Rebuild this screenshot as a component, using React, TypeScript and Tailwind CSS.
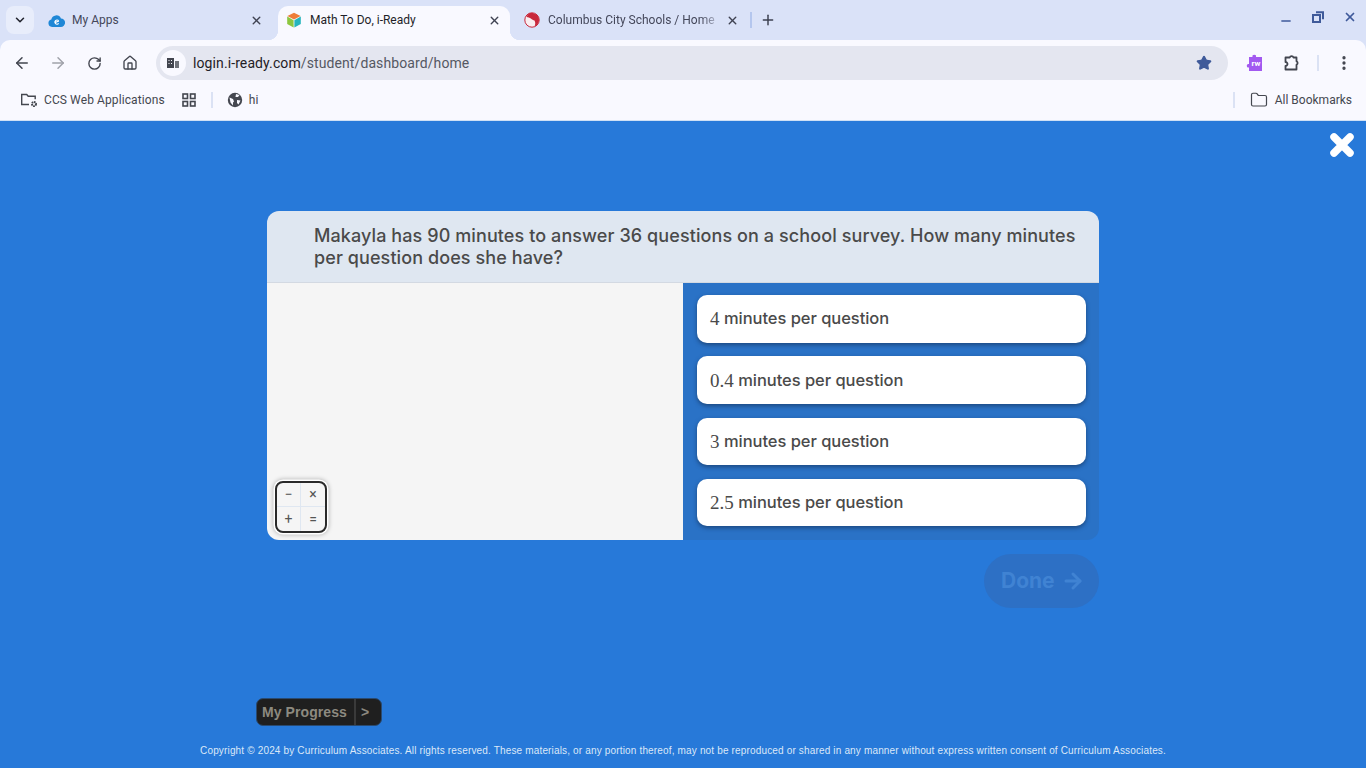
import React from "react";
import { ArrowLeft, ArrowRight, RotateCw, Home, ChevronDown, X, Plus, Minus, Star, Folder, MoreVertical } from "lucide-react";

const sans = "font-['Roboto','Liberation_Sans',sans-serif]";
const pop = "font-['Inter','Lato',sans-serif]";

function Tab({ active, icon, label, cls, fade }: { active?: boolean; icon: React.ReactNode; label: string; cls: string; fade?: boolean }) {
  return (
    <div className={`relative ${cls} h-[34px] mt-[6px] pb-[6px] flex items-center rounded-t-[10px] shrink-0 ${active ? "bg-[#f9f9ff] text-[#1f1f28]" : "text-[#44475a]"}`}>
      {active && <span className="absolute bottom-0 -left-[10px] w-[10px] h-[10px] bg-[radial-gradient(circle_at_0_0,transparent_10px,#f9f9ff_10.500px)]" />}
      {active && <span className="absolute bottom-0 -right-[10px] w-[10px] h-[10px] bg-[radial-gradient(circle_at_100%_0,transparent_10px,#f9f9ff_10.500px)]" />}
      <span className="w-4 h-4 flex items-center justify-center shrink-0">{icon}</span>
      <span className={`ml-[8px] flex-1 text-[12px] leading-4 whitespace-nowrap overflow-hidden ${fade ? "[mask-image:linear-gradient(to_right,black_88%,transparent)]" : ""}`}>{label}</span>
      <X size={13} strokeWidth={2.6} className="shrink-0 ml-1 text-[#3f4252]" />
    </div>
  );
}

function Answer({ num }: { num: string }) {
  return (
    <div className="h-[47.500px] rounded-[10px] bg-white pl-[13px] flex items-center text-[#4a4a4a] shadow-[0_2px_4px_rgba(20,50,90,0.65)]">
      <span className="font-['Liberation_Serif',serif] text-[19px] leading-none">{num}</span>
      <span className={`${pop} ml-[4.500px] text-[16.500px] font-medium tracking-[-0.05px]`}>minutes per question</span>
    </div>
  );
}

export default function App() {
  return (
    <div className={`w-[1366px] h-[768px] overflow-hidden flex flex-col bg-[#2779d9] ${sans}`}>
      <div className="shrink-0 bg-[#dae2f8]">
        {/* tab strip */}
        <div className="h-10 flex items-start pl-[6px]">
          <div className="w-[28px] h-[28px] mt-[6px] rounded-[8px] bg-[#e8edfb] flex items-center justify-center text-[#22242e]">
            <ChevronDown size={14} strokeWidth={2.6} />
          </div>
          <div className="ml-[6px] flex items-start">
            <Tab cls="w-[238px] pl-[8px] pr-[15px]" label="My Apps" icon={
              <svg viewBox="0 0 16 16" className="w-[17px] h-[17px] shrink-0"><path d="M3.800 14a3.500 3.500 0 0 1-.7-6.900A4.800 4.800 0 0 1 12.200 6 4 4 0 0 1 12 14Z" fill="#1f87d6" /><path d="M10 8.200A2 2 0 1 0 10 10.800M6.500 10l3.800-1.500" fill="none" stroke="#fff" strokeWidth="1.100" /></svg>
            } />
            <Tab active cls="w-[232px] pl-[8px] pr-[9px]" label="Math To Do, i-Ready" icon={
              <svg viewBox="0 0 16 16" className="w-4 h-4"><path d="M8 .7 14.600 4 8 7.600 1.400 4Z" fill="#ee7d3a" /><path d="M1.200 4.600 7.600 8.200v7.200L1.200 12Z" fill="#8cc63f" /><path d="M14.800 4.600 8.400 8.200v7.200l6.400-3.400Z" fill="#25b5bd" /></svg>
            } />
            <Tab fade cls="w-[240px] pl-[14px] pr-[11px]" label="Columbus City Schools / Home" icon={
              <svg viewBox="0 0 16 16" className="w-4 h-4"><circle cx="8" cy="8" r="7.200" fill="#f9eef0" stroke="#c8283c" strokeWidth="1" /><path d="M5 1.500C8 .3 15.500 1.500 15 8.500 14.800 11 13 13.500 10.500 14.500 11.500 12 11.500 10.500 10.500 8.500 8 8 6 5 2.500 5 3 3.500 4 2.200 5 1.500Z" fill="#c8283c" /></svg>
            } />
          </div>
          <div className="w-[2px] h-[16px] mt-[12px] bg-[#b4c6ee]" />
          <Plus size={16} strokeWidth={2.2} className="ml-[8px] mt-[12px] text-[#3c4050]" />
          <div className="ml-auto flex items-start text-[#3f5a9a]">
            <Minus size={14} strokeWidth={2.8} className="mt-[14px] mr-[19px]" />
            <svg viewBox="0 0 12 12" className="w-[12px] h-[12px] mt-[11px] mr-[19px]" fill="none" stroke="currentColor" strokeWidth="2"><rect x="1" y="4" width="7" height="7" /><path d="M4 1.200h7v7" /></svg>
            <X size={14} strokeWidth={3} className="mt-[10px] mr-[9px]" />
          </div>
        </div>

        {/* toolbar */}
        <div className="h-[46px] bg-[#f9f9ff] rounded-t-[10px] flex items-center pl-[13px] text-[#42454f]">
          <ArrowLeft size={18} strokeWidth={2} />
          <ArrowRight size={18} strokeWidth={2} className="ml-[18px] text-[#a0a2aa]" />
          <RotateCw size={15} strokeWidth={2.2} className="ml-[20px]" />
          <Home size={16} strokeWidth={2} className="ml-[20px]" />
          <div className="ml-[18px] w-[1072px] h-[34px] rounded-full bg-[#e4e6f0] flex items-center pl-[4px] pr-[16px]">
            <div className="w-[26px] h-[26px] rounded-full bg-[#f9f9ff] flex items-center justify-center">
              <svg viewBox="0 0 14 14" className="w-[14px] h-[14px]" fill="#42454f"><path d="M1 2h7v10H1Z" /><path d="M9 5h4v7H9Z" opacity=".75" /><path d="M2.500 4h1v1h-1Zm2.500 0h1v1H5ZM2.500 7h1v1h-1ZM5 7h1v1H5Z" fill="#f9f9ff" /></svg>
            </div>
            <span className="ml-[7px] text-[14px] tracking-[0.1px] text-[#1f2026]">login.i-ready.com<span className="text-[#555863]">/student/dashboard/home</span></span>
            <Star size={16} className="ml-auto text-[#3f5a9a]" fill="#3f5a9a" />
          </div>
          <div className="ml-[17px] w-[18px] h-[18px] flex items-center justify-center relative">
            <svg viewBox="0 0 18 18" className="w-[18px] h-[18px]"><path d="M4 3h3.500a1.800 1.800 0 1 1 3.500 0H17v14H4v-3.500a1.800 1.800 0 1 1 0-3.500Z" fill="#a259f0" /></svg>
            <span className="absolute left-[6.500px] top-[5px] text-[8px] font-bold text-white leading-[10px]">rw</span>
          </div>
          <svg viewBox="0 0 18 18" className="ml-[20px] w-[18px] h-[18px]" fill="none" stroke="currentColor" strokeWidth="1.800" strokeLinejoin="round"><path d="M2.500 3.500h4.200a2 2 0 0 1 3.800 0h3v3.700a2 2 0 0 1 0 3.600v4.700h-11v-3.500a2 2 0 0 0 0-4Z" /></svg>
          <div className="ml-[16px] w-[2px] h-[16px] bg-[#dbe2f4]" />
          <MoreVertical size={18} strokeWidth={2.400} className="ml-[16px]" />
        </div>

        {/* bookmarks */}
        <div className="h-[35px] bg-[#f9f9ff] flex items-center pb-[6px] pl-[20px] text-[12px] tracking-[0.1px] text-[#44474f] border-b border-[#cfe0f5]">
          <svg viewBox="0 0 18 16" className="w-[18px] h-[16px]" fill="none" stroke="#44474f" strokeWidth="1.400"><path d="M9 12.500H1.700V2.500h5l1.500 1.700h7v3" /><circle cx="14" cy="12" r="2" strokeWidth="2" strokeDasharray="1.500 .6" /></svg>
          <span className="ml-[6px]">CCS Web Applications</span>
          <svg viewBox="0 0 14 14" className="ml-[17px] w-[14px] h-[14px]" fill="none" stroke="#44474f" strokeWidth="1.600"><rect x="1" y="1" width="4.500" height="4.500" /><rect x="8.500" y="1" width="4.500" height="4.500" /><rect x="1" y="8.500" width="4.500" height="4.500" /><rect x="8.500" y="8.500" width="4.500" height="4.500" /></svg>
          <div className="ml-[15px] w-[2px] h-[16px] bg-[#dbe2f4]" />
          <svg viewBox="0 0 16 16" className="ml-[14px] w-[16px] h-[16px]"><circle cx="8" cy="8" r="7.200" fill="#44474f" /><path d="M2.500 5.500 6 7l1 2.500 -1 1v3L3.500 10.500ZM9 2l3.500 1-1.500 2H8.500ZM10 8l3.500.5-2 4L10 11Z" fill="#f9f9ff" /></svg>
          <span className="ml-[6px]">hi</span>
          <div className="ml-auto w-[2px] h-[16px] bg-[#dbe2f4]" />
          <Folder size={18} strokeWidth={1.600} className="ml-[15px]" />
          <span className="ml-[7px] mr-[14px] tracking-normal">All Bookmarks</span>
        </div>
      </div>

      {/* page */}
      <div className="relative flex-1 flex flex-col pt-[90px]">
        <svg viewBox="0 0 26 26" className="absolute left-[1329px] top-[11px] w-[26px] h-[26px]"><path d="M5 5 21 21M21 5 5 21" stroke="#fff" strokeWidth="7.500" strokeLinecap="round" /></svg>

        <div className="ml-[267px] w-[832px] h-[329px] rounded-[12px] overflow-hidden flex flex-col shrink-0">
          <div className={`h-[72px] shrink-0 bg-[#dfe7f1] border-b border-[#d3d9e2] pl-[47px] pr-[20px] pt-[14px] ${pop} text-[18px] leading-[22px] font-medium text-[#4a4a4a] tracking-[0.09px]`}>
            Makayla has 90 minutes to answer 36 questions on a school survey. How many minutes per question does she have?
          </div>
          <div className="flex-1 flex">
            <div className="w-[416px] bg-[#f5f5f5] relative">
              <div className="absolute left-[8px] bottom-[7px] w-[52px] h-[52px] rounded-[8px] border-2 border-[#2a2a2a] grid grid-cols-2 grid-rows-2 text-[#555] text-[14px] bg-[#f5f5f5] shadow-[0_0_0_1.500px_#fff,0_0_4px_2px_rgba(0,0,0,0.25)] overflow-hidden">
                <div className="flex items-center justify-center border-r border-b border-[#dfe7f1]">−</div>
                <div className="flex items-center justify-center border-b border-[#dfe7f1]">×</div>
                <div className="flex items-center justify-center border-r border-[#dfe7f1]">+</div>
                <div className="flex items-center justify-center">=</div>
              </div>
            </div>
            <div className="flex-1 bg-[#2a72c6] pt-[12px] pl-[14px] pr-[13px] flex flex-col gap-[13.800px]">
              <Answer num="4" />
              <Answer num="0.4" />
              <Answer num="3" />
              <Answer num="2.5" />
            </div>
          </div>
        </div>

        <div className={`ml-[984px] mt-[14px] w-[115px] h-[54px] rounded-full bg-[#2d70c5] flex items-center pl-[17px] text-[#4083d3] ${pop} text-[21px] font-bold shrink-0`}>
          Done
          <ArrowRight size={24} strokeWidth={3} className="ml-[6px]" />
        </div>

        <div className="ml-[256px] mt-[90px] w-[126px] h-[28px] rounded-[7px] bg-[#1f1f1f] border border-[#2a4a70] flex items-center text-[#8d8a80] font-['Liberation_Sans',sans-serif] text-[14px] font-bold shrink-0 tracking-[0.08px]">
          <span className="pl-[5px] w-[99px] h-full flex items-center border-r-2 border-[#3a3a3a] whitespace-nowrap">My Progress</span>
          <span className="pl-[5px]">&gt;</span>
        </div>

        <div className="mt-[18px] text-center text-[10px] tracking-[0.16px] leading-[14px] text-[#dbe8f8] font-['Liberation_Sans',sans-serif] whitespace-nowrap">
          Copyright © 2024 by Curriculum Associates. All rights reserved. These materials, or any portion thereof, may not be reproduced or shared in any manner without express written consent of Curriculum Associates.
        </div>
      </div>
    </div>
  );
}
